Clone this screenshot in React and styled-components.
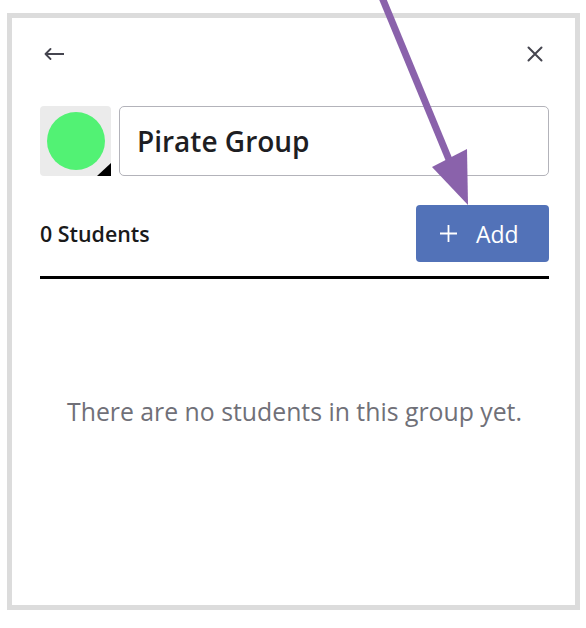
import React from "react";
import styled, { createGlobalStyle } from "styled-components";

const Global = createGlobalStyle`
  html, body { margin: 0; padding: 0; background: #ffffff; }
  body { font-family: "Open Sans", "Noto Sans", sans-serif; }
  * { box-sizing: border-box; }
`;

const Page = styled.div`
  position: relative;
  width: 586px;
  height: 628px;
  padding: 13px 0 0 7px;
`;

const Frame = styled.div`
  width: 573px;
  height: 597px;
  border: 5px solid #dcdcdc;
  background: #fff;
  padding: 20px 26px 0 28px;
  display: flex;
  flex-direction: column;
`;

const Header = styled.div`
  height: 32px;
  display: flex;
  align-items: center;
  justify-content: space-between;
  padding: 0 6px 0 4px;
`;

const IconButton = styled.button`
  border: none;
  background: none;
  padding: 0;
  display: flex;
  align-items: center;
  color: #45454f;
  cursor: pointer;
`;

const NameRow = styled.div`
  margin-top: 36px;
  display: flex;
  gap: 8px;
  height: 70px;
`;

const Swatch = styled.div`
  position: relative;
  width: 71px;
  height: 70px;
  background: #ebebeb;
  border-radius: 4px;
  display: flex;
  align-items: center;
  justify-content: center;
  flex-shrink: 0;
`;

const Dot = styled.div`
  width: 58px;
  height: 58px;
  border-radius: 50%;
  background: ${(p) => p.$color};
`;

const Corner = styled.div`
  position: absolute;
  right: 0;
  bottom: 0;
  width: 0;
  height: 0;
  border-left: 14px solid transparent;
  border-bottom: 13px solid #000;
`;

const NameInput = styled.div`
  flex: 1;
  border: 1.5px solid #b3b3ba;
  border-radius: 5px;
  display: flex;
  align-items: center;
  padding-left: 17px;
  font-size: 28px;
  font-weight: 600;
  color: #1e1e23;
`;

const StudentsRow = styled.div`
  margin-top: 29px;
  height: 57px;
  display: flex;
  align-items: center;
  justify-content: space-between;
`;

const Count = styled.span`
  font-size: 21.4px;
  font-weight: 600;
  color: #1a1a1a;
`;

const AddButton = styled.button`
  width: 133px;
  height: 57px;
  border: none;
  border-radius: 4px;
  background: #5272b8;
  color: #fff;
  font-family: "Open Sans", "Noto Sans", sans-serif;
  font-size: 23px;
  font-weight: 500;
  display: flex;
  align-items: center;
  justify-content: flex-start;
  gap: 19px;
  padding: 0 0 0 24px;
`;

const Divider = styled.div`
  margin-top: 14px;
  height: 3px;
  background: #000;
`;

const Empty = styled.p`
  margin: 116px 0 0;
  text-align: center;
  font-size: 24.8px;
  line-height: 32px;
  color: #707078;
`;

const Overlay = styled.svg`
  position: absolute;
  left: 0;
  top: 0;
  pointer-events: none;
`;

export default function App() {
  return (
    <Page>
      <Global />
      <Frame>
        <Header>
          <IconButton aria-label="Back">
            <svg width="20" height="12" viewBox="0 0 20 12" fill="none">
              <path d="M20 6H1.5M6.5 1L1.5 6l5 5" stroke="currentColor" strokeWidth="1.8" strokeLinecap="round" strokeLinejoin="round" />
            </svg>
          </IconButton>
          <IconButton aria-label="Close">
            <svg width="16" height="16" viewBox="0 0 16 16" fill="none">
              <path d="M1.5 1.5l13 13M14.5 1.5l-13 13" stroke="currentColor" strokeWidth="2" strokeLinecap="round" />
            </svg>
          </IconButton>
        </Header>
        <NameRow>
          <Swatch>
            <Dot $color="#52f274" />
            <Corner />
          </Swatch>
          <NameInput>Pirate Group</NameInput>
        </NameRow>
        <StudentsRow>
          <Count>0 Students</Count>
          <AddButton>
            <svg width="17" height="17" viewBox="0 0 17 17" fill="none">
              <path d="M8.5 0v17M0 8.5h17" stroke="#fff" strokeWidth="1.8" />
            </svg>
            Add
          </AddButton>
        </StudentsRow>
        <Divider />
        <Empty>There are no students in this group yet.</Empty>
      </Frame>
      <Overlay width="586" height="628" viewBox="0 0 586 628">
        <line x1="381" y1="-5" x2="450" y2="162" stroke="#8a62ab" strokeWidth="7" />
        <polygon points="432,167 467,149 468,205" fill="#8a62ab" />
      </Overlay>
    </Page>
  );
}
